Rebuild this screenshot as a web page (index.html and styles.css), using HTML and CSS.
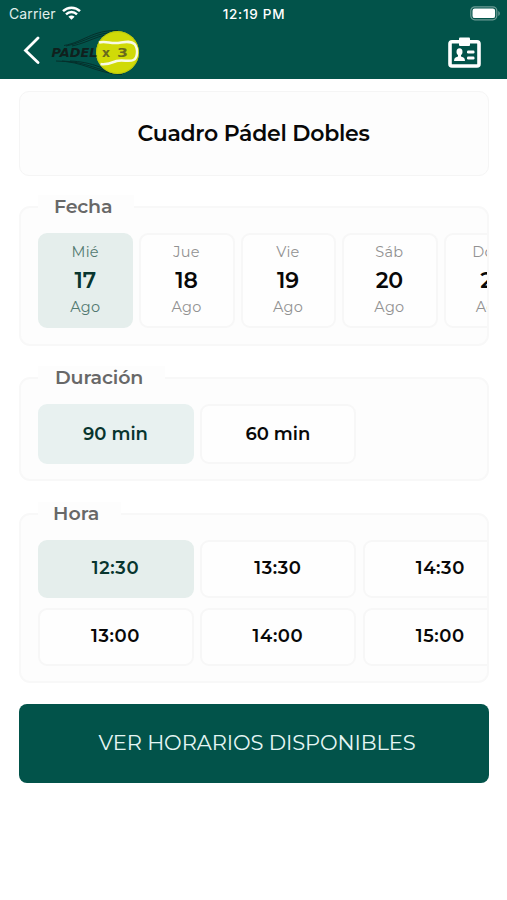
FILE: index.html
```html
<!DOCTYPE html>
<html lang="es">
<head>
<meta charset="utf-8">
<meta name="viewport" content="width=device-width, initial-scale=1">
<title>Cuadro Pádel Dobles</title>
<link rel="stylesheet" href="styles.css">
</head>
<body>
<header class="header">
  <div class="status">
    <div class="status-left"><span class="carrier">Carrier</span>
      <svg class="wifi" width="19" height="14" viewBox="0 0 19 14" fill="none" stroke="#fff" stroke-width="2.5"><path d="M1 5.2C5.8.6 13.2.6 18 5.2M4 8.3c3.2-3 7.800-3 11 0"/><path d="M6.400 10.700c1.800-1.600 4.400-1.600 6.200 0L9.500 13.800z" fill="#fff" stroke="none"/></svg>
    </div>
    <span class="clock">12:19 PM</span>
    <svg class="battery" width="31" height="15" viewBox="0 0 31 15"><rect x=".8" y=".8" width="26" height="13" rx="4" fill="none" stroke="#6c9c95" stroke-width="1.200"/><rect x="2.500" y="2.500" width="22.600" height="9.600" rx="2.200" fill="#fff"/><path d="M28.300 5c2 .7 2 4.300 0 5z" fill="#6c9c95"/></svg>
  </div>
  <nav class="nav">
    <svg class="back" width="18" height="28" viewBox="0 0 18 28" fill="none" stroke="#fff" stroke-width="2.800" stroke-linecap="round"><path d="M15 2 2.500 14.500 15 26.500"/></svg>
    <svg class="logo" width="92" height="48" viewBox="0 0 92 48">
      <g fill="none" stroke="#052f2b" stroke-width="1"><path d="M14 17.500C34 14 42 2 68 2.500M16 18C36 14 46 4 66 4.500M22 18C40 14 49 6 62 7M6 33c28 0 38 12 66 13.500M12 33c26 1 36 10 56 12M20 33c22 1 30 7 42 10"/></g>
      <circle cx="67.500" cy="24.500" r="21.500" fill="#d0da08"/><circle cx="67.500" cy="24.500" r="20.900" fill="none" stroke="#b9c60c" stroke-width="1"/>
      <path d="M49 14.500c6-2 11 1 17 .5 7-.5 14-3 18.500 1 4 5 3 14-1 16-5 2.500-10-1-17 1-5 2-9 4-16 3" fill="none" stroke="#f8fae5" stroke-width="2.500"/>
      <text class="logo-word" x="1.500" y="28.500" textLength="46" lengthAdjust="spacingAndGlyphs">PADEL</text>
      <text class="logo-x" x="52" y="28.500" textLength="8" lengthAdjust="spacingAndGlyphs">x</text>
      <text class="logo-three" x="67" y="28.500" textLength="11" lengthAdjust="spacingAndGlyphs">3</text>
    </svg>
    <svg class="badge" width="33" height="31" viewBox="0 0 33 31"><rect x="2" y="4.800" width="29" height="24.200" rx="2" fill="none" stroke="#fff" stroke-width="3.600"/><path d="M12 .5h9a1 1 0 0 1 1 1V8a1 1 0 0 1-1 1h-9a1 1 0 0 1-1-1V1.500a1 1 0 0 1 1-1z" fill="#fff"/><g fill="#fff"><ellipse cx="11.500" cy="14.800" rx="3" ry="3.500"/><path d="M10 17h3v2.500l2.500 1q1.500.7 1.500 3.500H6q0-2.800 1.500-3.500l2.500-1z"/><rect x="19" y="13.500" width="7.500" height="3" rx="1.200"/><rect x="19" y="19.500" width="7.500" height="3" rx="1.200"/></g></svg>
  </nav>
</header>
<main class="content">
  <h1 class="title"><span>Cuadro Pádel Dobles</span></h1>
  <section class="panel dates">
    <h2 class="legend fecha">Fecha</h2>
    <div class="row">
      <div class="day selected"><span>Mié</span><b>17</b><span>Ago</span></div>
      <div class="day"><span>Jue</span><b>18</b><span>Ago</span></div>
      <div class="day"><span>Vie</span><b>19</b><span>Ago</span></div>
      <div class="day"><span>Sáb</span><b>20</b><span>Ago</span></div>
      <div class="day"><span>Dom</span><b>21</b><span>Ago</span></div>
    </div>
  </section>
  <section class="panel durations">
    <h2 class="legend duracion">Duración</h2>
    <div class="row">
      <div class="option selected">90 min</div>
      <div class="option">60 min</div>
    </div>
  </section>
  <section class="panel hours">
    <h2 class="legend hora">Hora</h2>
    <div class="slots">
      <div class="option selected">12:30</div>
      <div class="option">13:30</div>
      <div class="option">14:30</div>
      <div class="option">13:00</div>
      <div class="option">14:00</div>
      <div class="option">15:00</div>
    </div>
  </section>
  <button class="submit"><span>VER HORARIOS DISPONIBLES</span></button>
</main>
</body>
</html>
```
FILE: styles.css
```css
* { box-sizing: border-box; }
body { margin: 0; height: 900px; overflow: hidden; background: #fff; color: #080808; font-family: Montserrat, Gotham, Inter, sans-serif; }
.header { height: 79px; background: #02534a; color: #fff; }
.status { height: 28px; display: grid; grid-template-columns: 1fr auto 1fr; align-items: center; padding: 0 6px 0 9px; font-family: Inter, sans-serif; }
.status-left { display: flex; align-items: center; gap: 6px; padding-bottom: 2px; }
.carrier { font-size: 14px; letter-spacing: .1px; color: #e0efec; }
.clock { font-size: 13.500px; font-weight: 500; letter-spacing: .75px; margin-right: 2px; }
.battery { justify-self: end; margin-top: -2px; }
.nav { display: flex; height: 51px; padding: 0 26px 0 23px; }
.back { margin-top: 8px; }
.logo { margin-left: 9px; }
.logo text { font-family: "DejaVu Sans", sans-serif; font-weight: bold; }
.logo-word { font-size: 13px; font-style: italic; fill: #10201d; }
.logo-x { font-size: 13px; fill: #68691d; }
.logo-three { font-size: 12.500px; fill: #68691d; }
.badge { margin-left: auto; margin-top: 9px; }
.content { padding: 12px 18px 0 19px; }
.title { height: 85px; margin: 0; display: flex; align-items: center; justify-content: center; border: 1.500px solid #f5f5f5; border-radius: 10px; background: #fdfdfd; font-size: 22px; font-weight: 600; letter-spacing: -.28px; padding-right: 1px; }
.panel { border: 2px solid #f8f8f8; border-radius: 11px; background: #fdfdfd; padding-left: 17px; }
.dates { height: 140px; margin-top: 30px; }
.durations { height: 104px; margin-top: 31px; }
.hours { height: 170px; margin-top: 32px; }
.legend { width: max-content; height: 24px; line-height: 24px; margin: -13px 0 14px 0; padding: 0 22px 0 16px; background: #fdfdfd; color: #686868; font-size: 19px; font-weight: 600; }
.fecha { letter-spacing: -.15px; }
.duracion { letter-spacing: -.1px; padding-left: 17px; }
.hora { letter-spacing: 0; padding-left: 15px; }
.row { display: flex; gap: 6px; overflow: hidden; }
.day { flex: 0 0 95.400px; height: 95px; border: 2px solid #f7f7f7; border-radius: 9px; background: #fefefe; display: grid; grid-template-rows: 29px 28px 25px; align-content: start; align-items: center; justify-items: center; padding: 2px 1px 0 0; color: #929292; }
.day span { font-size: 14.500px; letter-spacing: .25px; font-weight: 400; }
.day b { color: #080808; font-size: 22px; font-weight: 600; letter-spacing: -.1px; }
.option { width: 156px; height: 58px; display: flex; align-items: center; justify-content: center; border: 2px solid #f7f7f7; border-radius: 9px; background: #fefefe; font-size: 18px; font-weight: 600; letter-spacing: .6px; padding: 0 1px 2px 0; }
.durations .option { height: 60px; letter-spacing: 0; padding: 0 1px 1px 0; }
.durations .row { gap: 6.400px; }
.selected { background: #e5eeec; border-color: #e5eeec; color: #527970; }
.durations .selected { background: #e8f1f0; border-color: #e8f1f0; }
.selected b, .option.selected, .durations .selected { color: #08352e; }
.slots { display: grid; grid-template-columns: repeat(3, 156px); gap: 10px 6.400px; overflow: hidden; }
.submit { display: flex; width: 100%; height: 79px; margin-top: 20.500px; border: 0; border-radius: 8px; align-items: center; justify-content: center; background: #02534a; color: #e5f6f4; font: 400 21px Montserrat, Gotham, Inter, sans-serif; letter-spacing: -.1px; padding: 0 0 2px 6px; }
```
